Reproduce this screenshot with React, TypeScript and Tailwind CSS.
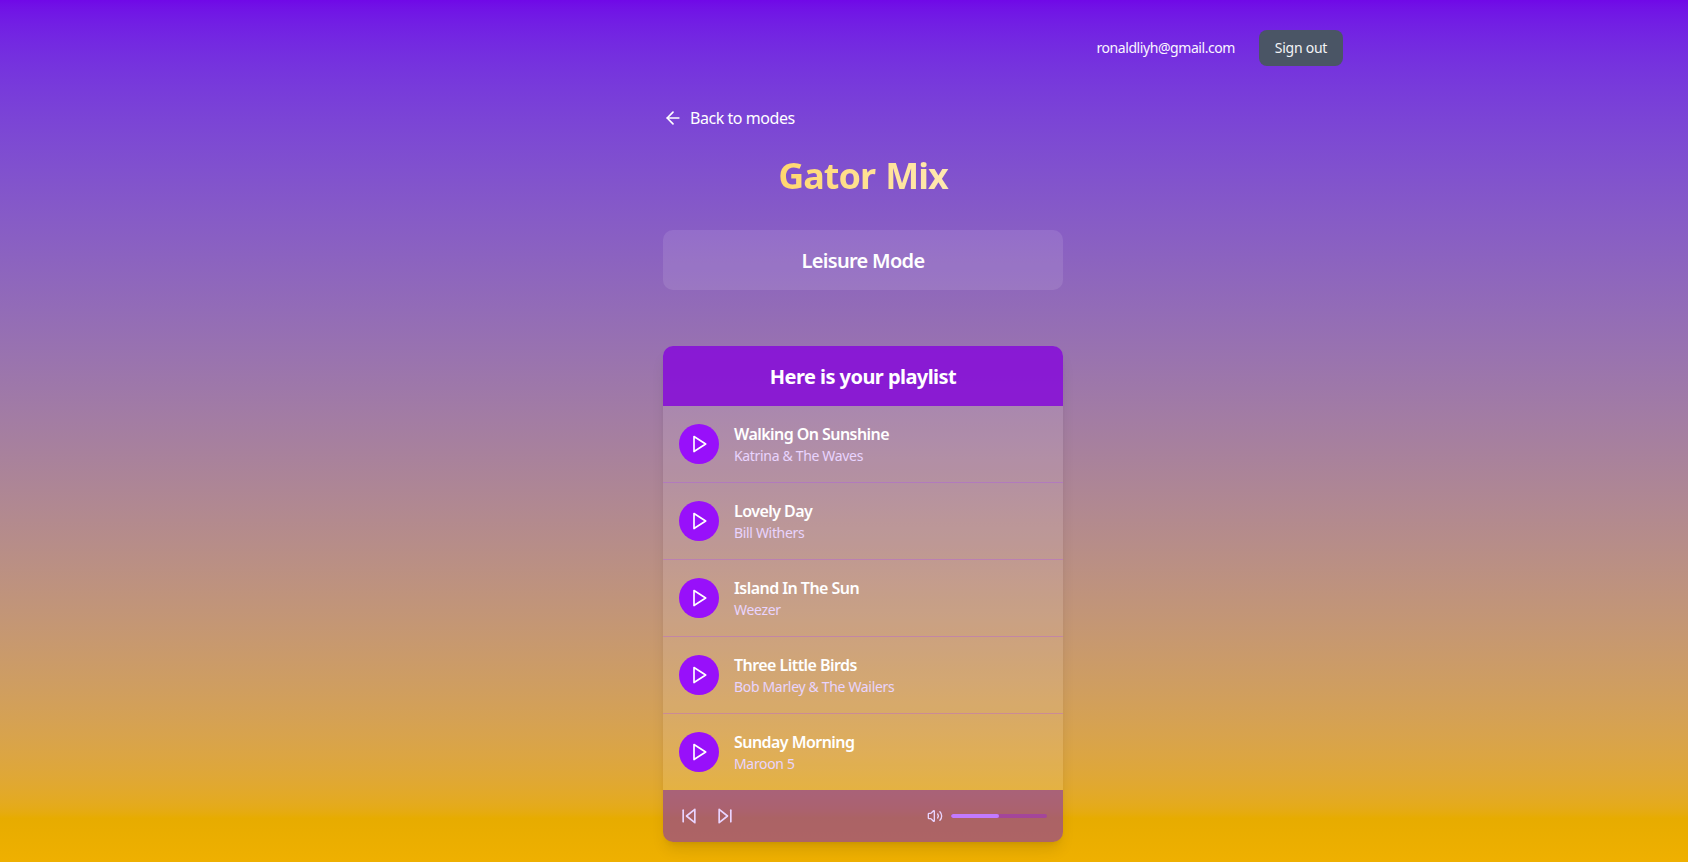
import type { ReactNode } from "react";
import { ArrowLeft, Volume2 } from "lucide-react";

const songs = [
  { title: "Walking On Sunshine", artist: "Katrina & The Waves" },
  { title: "Lovely Day", artist: "Bill Withers" },
  { title: "Island In The Sun", artist: "Weezer" },
  { title: "Three Little Birds", artist: "Bob Marley & The Wailers" },
  { title: "Sunday Morning", artist: "Maroon 5" },
];

function Icon({ children }: { children: ReactNode }) {
  return (
    <svg
      viewBox="0 0 24 24"
      fill="none"
      stroke="currentColor"
      strokeWidth={2}
      strokeLinecap="round"
      strokeLinejoin="round"
      className="size-5"
    >
      {children}
    </svg>
  );
}

function Header() {
  return (
    <header className="mx-auto flex w-[998px] items-center justify-end gap-6 pt-[30px]">
      <span className="text-sm tracking-[-0.43px] text-purple-50">ronaldliyh@gmail.com</span>
      <button className="h-9 w-[84px] rounded-lg bg-gray-600 text-sm tracking-[-0.25px] text-gray-100">
        Sign out
      </button>
    </header>
  );
}

function Player() {
  return (
    <div className="flex h-[52px] items-center justify-between bg-[#6e11b0]/50 px-4 text-purple-200">
      <div className="flex gap-4">
        <Icon>
          <path d="M19 20 9 12l10-8z" />
          <path d="M5 19V5" />
        </Icon>
        <Icon>
          <path d="m5 4 10 8-10 8z" />
          <path d="M19 5v14" />
        </Icon>
      </div>
      <div className="flex items-center gap-2">
        <Volume2 className="size-4" />
        <div className="h-1 w-24 overflow-hidden rounded-full bg-[#9810fa]/35">
          <div className="h-full w-1/2 rounded-full bg-purple-400" />
        </div>
      </div>
    </div>
  );
}

export default function App() {
  return (
    <div className="h-screen overflow-hidden">
      <div className="h-[868px] bg-linear-to-b from-violet-700 to-yellow-500 font-['Noto_Sans','Open_Sans',sans-serif] text-white">
        <Header />

        <main className="mx-auto mt-10 w-[400px] translate-x-[19px]">
          <button className="flex h-6 items-center gap-[7px]">
            <ArrowLeft className="size-5" />
            <span className="tracking-[-0.45px]">Back to modes</span>
          </button>

          <h1 className="mt-[26px] bg-linear-to-r from-[#ffcb20] to-[#fff3d8] bg-clip-text text-center text-4xl font-bold tracking-[-1px] text-transparent [word-spacing:2px]">
            Gator Mix
          </h1>

          <section className="mt-[34px] flex h-[60px] items-center justify-center rounded-[10px] bg-white/10">
            <h2 className="pt-0.5 text-xl font-semibold tracking-[-0.7px]">Leisure Mode</h2>
          </section>

          <section className="mt-14 overflow-hidden rounded-[10px] bg-white/10 shadow-lg">
            <div className="flex h-[60px] items-center justify-center bg-[#8200db]/80">
              <h2 className="pt-0.5 text-xl font-bold tracking-[-0.55px]">Here is your playlist</h2>
            </div>
            <ul className="divide-y divide-[#ad46ff]/30">
              {songs.map((song) => (
                <li key={song.title} className="flex h-[77px] items-center gap-[15px] px-4 last:h-[76px]">
                  <button className="flex size-10 shrink-0 items-center justify-center rounded-full bg-[#9810fa]">
                    <Icon>
                      <path d="M6 3l14 9-14 9z" />
                    </Icon>
                  </button>
                  <div>
                    <p className="font-semibold tracking-[-0.55px]">{song.title}</p>
                    <p className="text-sm tracking-[-0.33px] text-purple-200">{song.artist}</p>
                  </div>
                </li>
              ))}
            </ul>
            <Player />
          </section>
        </main>
      </div>
    </div>
  );
}
